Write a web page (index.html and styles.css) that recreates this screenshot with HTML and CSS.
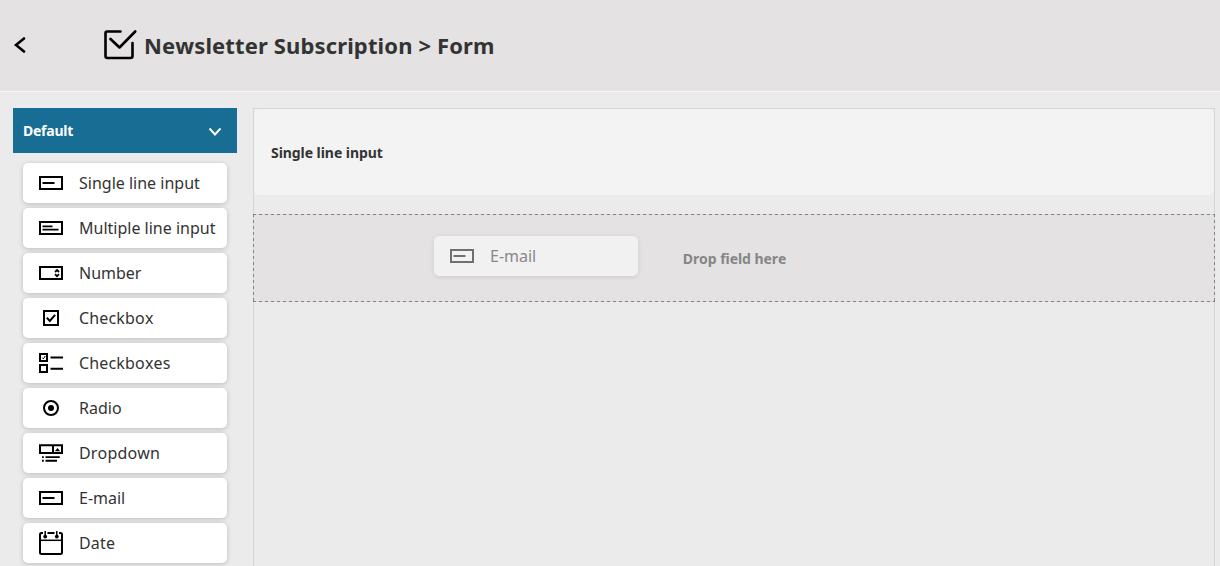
FILE: index.html
```html
<!DOCTYPE html>
<html lang="en">
<head>
<meta charset="utf-8">
<title>Newsletter Subscription &gt; Form</title>
<link rel="stylesheet" href="styles.css">
</head>
<body>
<svg class="defs" width="0" height="0">
  <symbol id="single" viewBox="0 0 24 24"><path d="M1 6H23V18H1Z"/><path d="M3.5 12H15.5"/></symbol>
  <symbol id="multi" viewBox="0 0 24 24"><path d="M1 6H23V18H1Z"/><path d="M3.5 10.3H13.5M3.5 13.7H19.5" stroke-width="1.8"/></symbol>
  <symbol id="number" viewBox="0 0 24 24"><path d="M1 6H23V18H1Z"/><path d="M16 11 18 9l2 2M16 13.2l2 2 2-2" stroke-width="1.8"/></symbol>
  <symbol id="checkbox" viewBox="0 0 24 24"><path d="M5 5H19V19H5Z"/><path d="M7.8 11.600l3 3.400 5.300-6.200"/></symbol>
  <symbol id="checkboxes" viewBox="0 0 24 24"><path d="M1 3H8V10H1ZM1 14H8V21H1ZM11.500 6.500H24M11.500 17.700H24"/><path d="M3.200 6.600l1.200 1.200L6.300 5" stroke-width="1"/></symbol>
  <symbol id="radio" viewBox="0 0 24 24"><circle cx="12" cy="12" r="7"/><circle class="solid" cx="12" cy="12" r="3"/></symbol>
  <symbol id="dropdown" viewBox="0 0 24 24"><path d="M1 4.300H23V12H1ZM14 4V12"/><path class="solid" d="M15.800 10.200 18.500 7l2.700 3.200Z"/><path d="M3 16.100H4.800M6.500 16.100H20.800M3 19.700H4.800M6.500 19.700H18" stroke-width="1.900"/></symbol>
  <symbol id="date" viewBox="0 0 24 24"><path d="M4 2H2.500Q1 2 1 3.500V21.500Q1 23 2.500 23H21.500Q23 23 23 21.500V3.500Q23 2 21.500 2H20M8.500 2H15.500"/><path d="M1 9.300H23" stroke-width="1.500"/><path d="M6.200 0V5M17.800 0V5" stroke-width="1.500"/><circle class="solid" cx="6.200" cy="5.600" r="1.900"/><circle class="solid" cx="17.800" cy="5.600" r="1.900"/></symbol>
</svg>
<header class="header">
  <svg class="back" viewBox="0 0 12 16"><path d="M10 1.500 2 8l8 6.500"/></svg>
  <svg class="form-icon" viewBox="0 0 34 32"><path d="M17.500 2.500H4Q2.500 2.500 2.500 4V27Q2.500 29 4.500 29H27.500Q29.500 29 29.500 27V14"/><path d="M7.500 10 16.500 18.500 32.200 2.500"/></svg>
  <h1 class="title">Newsletter Subscription &gt; Form</h1>
</header>
<main class="main">
  <aside class="sidebar">
    <div class="group">Default<svg class="chevron" viewBox="0 0 14 10"><path d="M1.500 1.500 7 7.500l5.500-6"/></svg></div>
    <div class="fields">
      <div class="field"><svg class="icon"><use href="#single"/></svg>Single line input</div>
      <div class="field"><svg class="icon"><use href="#multi"/></svg>Multiple line input</div>
      <div class="field"><svg class="icon"><use href="#number"/></svg>Number</div>
      <div class="field spaced"><svg class="icon"><use href="#checkbox"/></svg>Checkbox</div>
      <div class="field spaced"><svg class="icon"><use href="#checkboxes"/></svg>Checkboxes</div>
      <div class="field"><svg class="icon"><use href="#radio"/></svg>Radio</div>
      <div class="field spaced"><svg class="icon"><use href="#dropdown"/></svg>Dropdown</div>
      <div class="field"><svg class="icon"><use href="#single"/></svg>E-mail</div>
      <div class="field spaced"><svg class="icon"><use href="#date"/></svg>Date</div>
    </div>
  </aside>
  <section class="canvas">
    <div class="placed">Single line input</div>
    <div class="drop">Drop field here
      <div class="field dragged"><svg class="icon"><use href="#single"/></svg>E-mail</div>
    </div>
  </section>
</main>
</body>
</html>
```

FILE: styles.css
```css
* { box-sizing: border-box; }
body {
  margin: 0;
  height: 566px;
  overflow: hidden;
  display: flex;
  flex-direction: column;
  background: #ebebeb;
  color: #333;
  font-family: "Noto Sans", sans-serif;
  font-kerning: none;
}
svg { fill: none; stroke: #000; flex: none; }
.defs { position: absolute; }
.header {
  height: 92px;
  flex: none;
  display: flex;
  align-items: center;
  padding: 0 0 2px 14px;
  background: #e4e2e3;
  border-bottom: 1px solid #f6f6f6;
}
.back { width: 12px; height: 16px; stroke-width: 2.6; stroke-linecap: round; margin-right: 76.5px; }
.form-icon { width: 34px; height: 32px; stroke-width: 2.6; stroke-linecap: round; stroke-linejoin: round; }
.title { margin: 0 0 0 7.5px; font-size: 22px; line-height: 30px; font-weight: 700; letter-spacing: 0.13px; white-space: nowrap; }
.main { flex: 1; display: flex; gap: 16px; padding: 16px 5px 0 13px; min-height: 0; }
.sidebar { width: 224px; flex: none; }
.group {
  height: 45px;
  display: flex;
  align-items: center;
  justify-content: space-between;
  padding: 0 15px 0 10px;
  background: #176d93;
  color: #fff;
  font-size: 14px;
  font-weight: 700;
  letter-spacing: -0.25px;
}
.chevron { width: 14px; height: 10px; stroke: #fff; stroke-width: 2; margin-top: 2px; }
.fields { display: flex; flex-direction: column; gap: 5px; padding: 10px; }
.field {
  height: 40px;
  flex: none;
  display: flex;
  align-items: center;
  gap: 16px;
  padding-left: 16px;
  background: #fff;
  border-radius: 5px;
  box-shadow: 0 1px 5px rgba(0, 0, 0, 0.2);
  font-size: 16px;
  white-space: nowrap;
}
.spaced { letter-spacing: 0.16px; }
.icon { width: 24px; height: 24px; stroke-width: 2; }
.solid { fill: #000; stroke: none; }
.canvas { flex: 1; border: 1px solid #d6d6d6; border-bottom: 0; }
.placed {
  height: 86px;
  display: flex;
  align-items: center;
  padding-left: 17px;
  background: #f3f3f3;
  border-radius: 5px;
  font-size: 14px;
  font-weight: 700;
  letter-spacing: -0.06px;
}
.drop {
  --dash: #858585 0 3px, #d9d8d8 3px 6px;
  position: relative;
  height: 88px;
  margin: 19px -1px 0;
  padding-left: 1px;
  display: flex;
  align-items: center;
  justify-content: center;
  background:
    repeating-linear-gradient(to right, var(--dash)) top / 100% 1px no-repeat,
    repeating-linear-gradient(to right, var(--dash)) bottom / 100% 1px no-repeat,
    repeating-linear-gradient(to bottom, var(--dash)) left / 1px 100% no-repeat,
    repeating-linear-gradient(to bottom, var(--dash)) right / 1px 100% no-repeat,
    #e4e2e3;
  color: #868686;
  font-size: 14px;
  font-weight: 700;
  letter-spacing: -0.06px;
}
.dragged {
  position: absolute;
  left: 181px;
  top: 22px;
  width: 204px;
  background: #f1f1f1;
  color: #888;
  font-weight: 400;
  letter-spacing: 0;
  box-shadow: 0 1px 5px rgba(0, 0, 0, 0.1);
}
.dragged .icon { stroke: #707070; }
```
